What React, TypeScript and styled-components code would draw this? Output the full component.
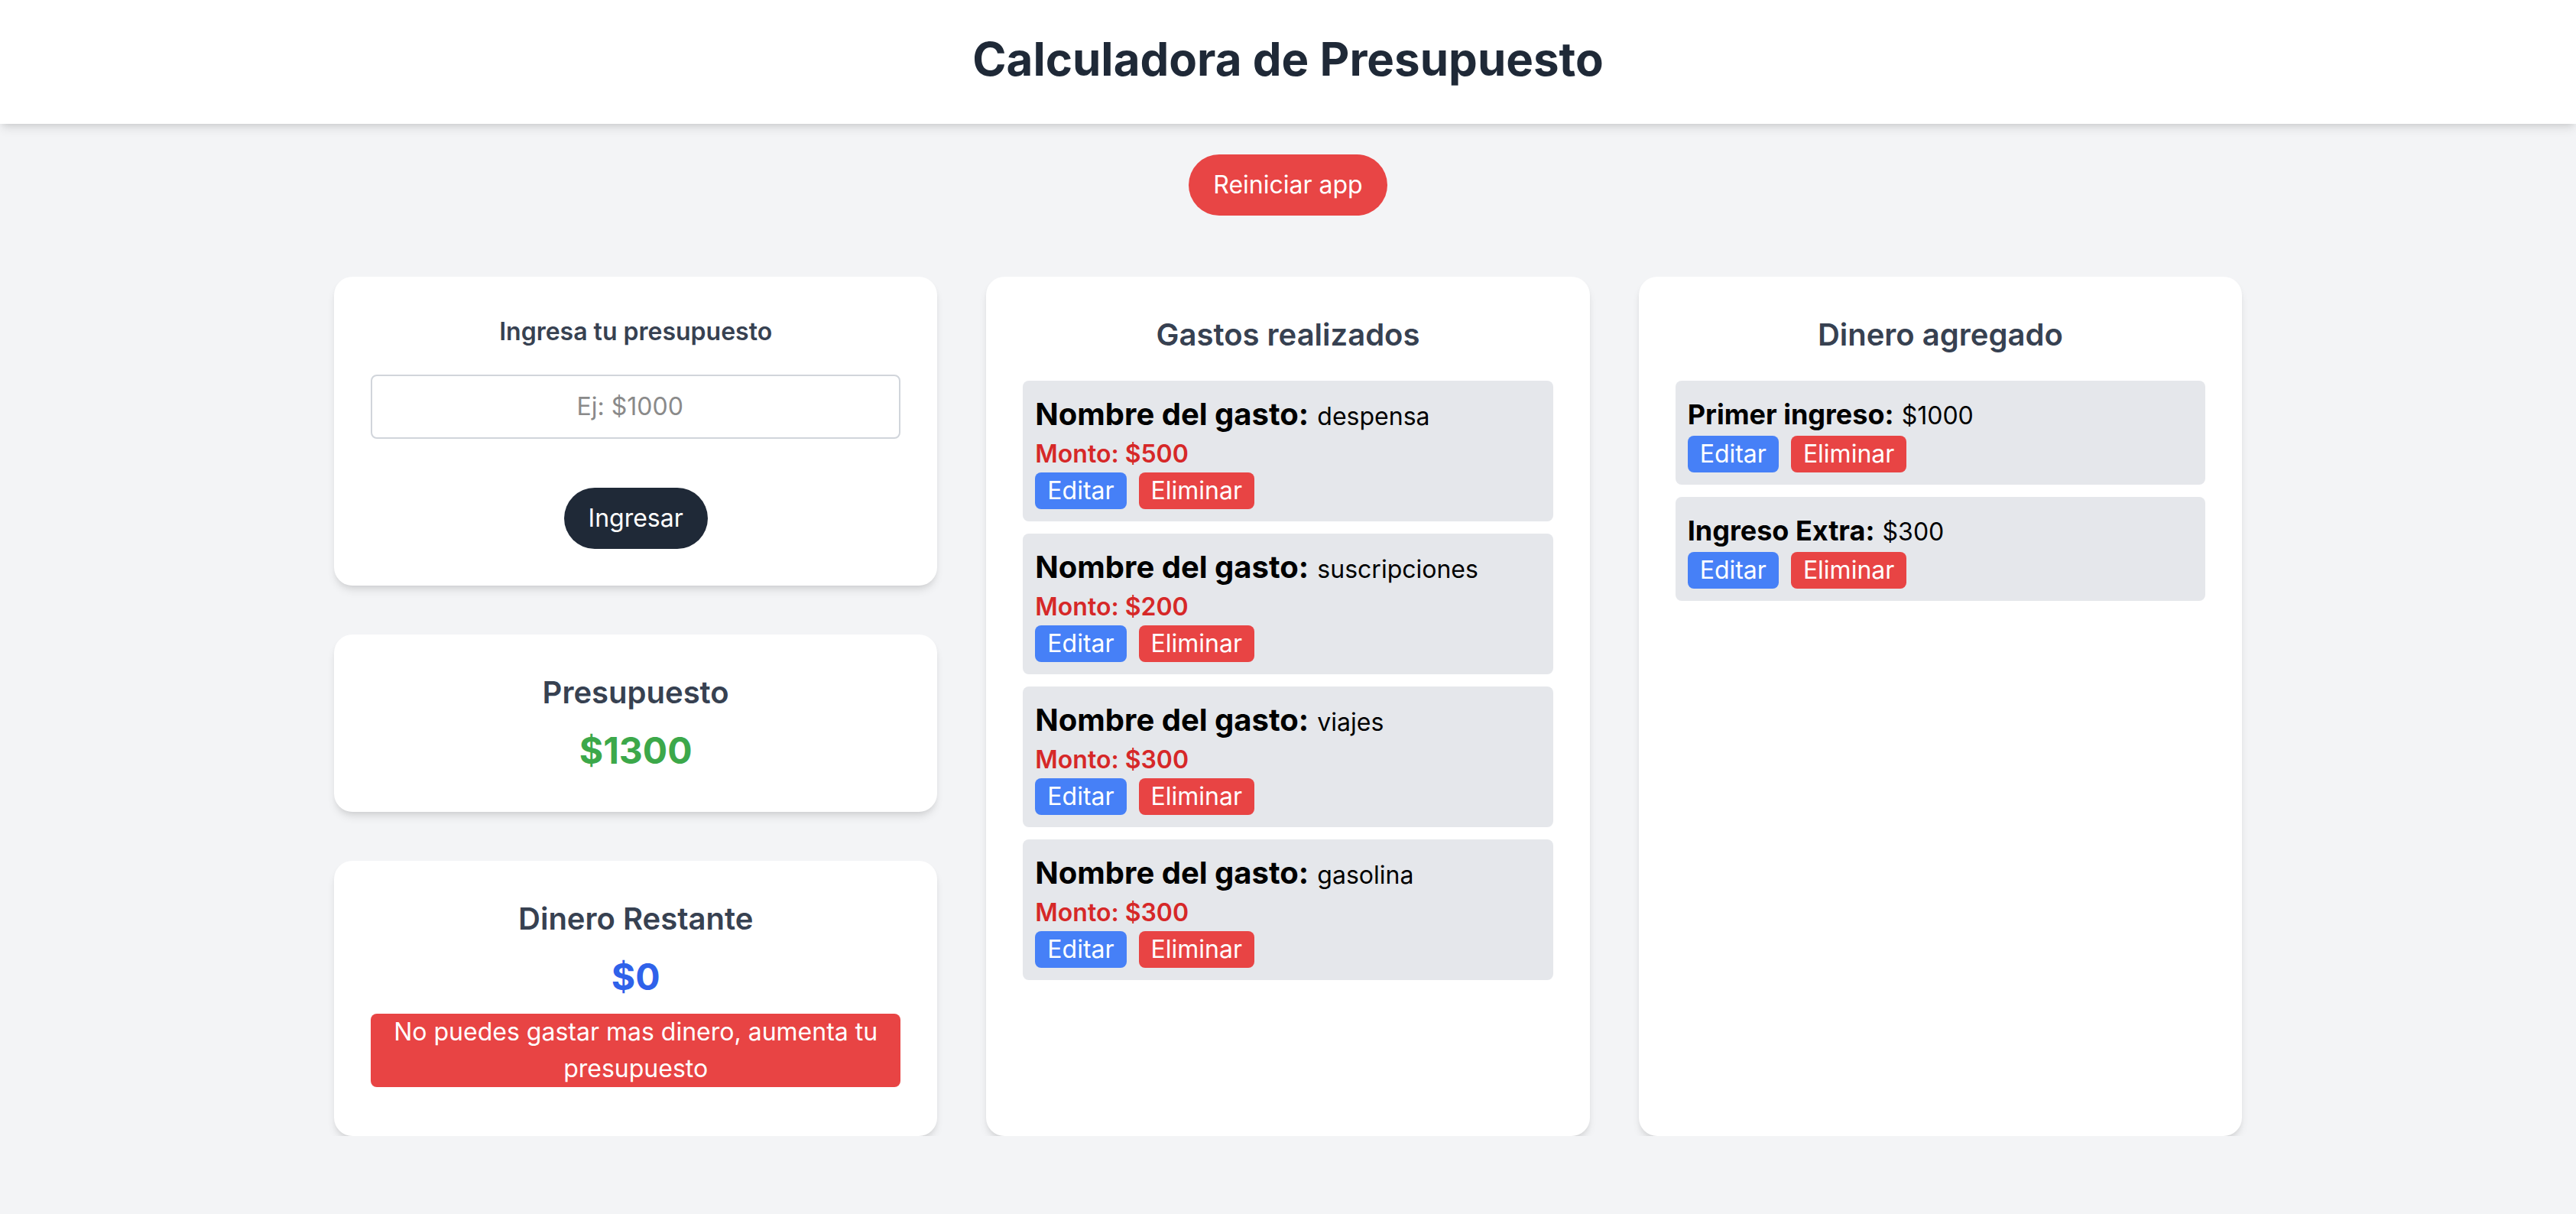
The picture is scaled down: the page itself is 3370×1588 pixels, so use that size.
import styled, { createGlobalStyle } from "styled-components";

interface Gasto {
  id: number;
  nombre: string;
  monto: number;
}

interface Ingreso {
  id: number;
  etiqueta: string;
  monto: number;
}

const gastos: Gasto[] = [
  { id: 1, nombre: "despensa", monto: 500 },
  { id: 2, nombre: "suscripciones", monto: 200 },
  { id: 3, nombre: "viajes", monto: 300 },
  { id: 4, nombre: "gasolina", monto: 300 },
];

const ingresos: Ingreso[] = [
  { id: 1, etiqueta: "Primer ingreso:", monto: 1000 },
  { id: 2, etiqueta: "Ingreso Extra:", monto: 300 },
];

const GlobalStyle = createGlobalStyle`
  * {
    box-sizing: border-box;
  }

  body {
    margin: 0;
    background: #f3f4f6;
    font-family: Inter, "Liberation Sans", sans-serif;
    color: #000;
  }
`;

const shadow = `0 8px 12px -2px rgba(0, 0, 0, 0.1), 0 4px 8px -4px rgba(0, 0, 0, 0.1)`;

const Header = styled.header`
  background: #fff;
  box-shadow: ${shadow};
  padding: 41px 0 49px;
  text-align: center;

  h1 {
    margin: 0;
    font-size: 60px;
    line-height: 72px;
    font-weight: 700;
    color: #1f2937;
  }
`;

const ResetRow = styled.div`
  display: flex;
  justify-content: center;
  margin: 40px 0 80px;
`;

const PillButton = styled.button<{ $tone: "red" | "dark" }>`
  height: 80px;
  padding: 0 32px;
  border: none;
  border-radius: 9999px;
  background: ${({ $tone }) => ($tone === "red" ? "#e84545" : "#1f2937")};
  color: #fff;
  font-family: inherit;
  font-size: 32px;
  line-height: 48px;
  cursor: pointer;
`;

const Container = styled.main`
  max-width: 2560px;
  margin: 0 auto;
  padding: 0 32px;
  display: grid;
  grid-template-columns: repeat(3, minmax(0, 1fr));
  gap: 64px;
  align-items: stretch;
`;

const Column = styled.div`
  display: flex;
  flex-direction: column;
  gap: 64px;
`;

const Card = styled.section`
  background: #fff;
  border-radius: 24px;
  box-shadow: ${shadow};
  padding: 48px;
  text-align: center;
`;

const CardTitle = styled.h2<{ $small?: boolean }>`
  margin: 0;
  font-size: ${({ $small }) => ($small ? "32px" : "40px")};
  line-height: ${({ $small }) => ($small ? "48px" : "56px")};
  font-weight: 600;
  color: #374151;
`;

const BudgetInput = styled.input`
  display: block;
  width: 100%;
  margin-top: 32px;
  padding: 16px;
  border: 2px solid #d1d5db;
  border-radius: 8px;
  font-family: inherit;
  font-size: 32px;
  line-height: 48px;
  text-align: center;
  color: #111827;
  outline: none;

  &::placeholder {
    color: #8a8a8a;
  }
`;

const SubmitRow = styled.div`
  display: flex;
  justify-content: center;
  margin-top: 64px;
`;

const Amount = styled.p<{ $color: string }>`
  margin: 16px 0 0;
  font-size: 48px;
  line-height: 64px;
  font-weight: 700;
  color: ${({ $color }) => $color};
`;

const Alert = styled.div`
  margin: 16px 0 16px;
  padding: 0 16px;
  background: #e84444;
  border-radius: 8px;
  color: #fff;
  font-size: 32px;
  line-height: 48px;
`;

const List = styled.ul`
  list-style: none;
  margin: 32px 0 0;
  padding: 0;
  display: flex;
  flex-direction: column;
  gap: 16px;
  text-align: left;
`;

const Item = styled.li`
  background: #e5e7eb;
  border-radius: 8px;
  padding: 16px;
`;

const ItemLine = styled.p<{ $size: number }>`
  margin: 0;
  font-size: ${({ $size }) => $size}px;
  line-height: 56px;

  strong {
    font-weight: 700;
  }

  span {
    font-size: 32px;
    line-height: 1;
  }
`;

const Monto = styled.p`
  margin: 0;
  font-size: 32px;
  line-height: 48px;
  font-weight: 600;
  color: #d62828;
`;

const Actions = styled.div`
  display: flex;
  gap: 16px;
`;

const SmallButton = styled.button<{ $tone: "blue" | "red" }>`
  border: none;
  border-radius: 8px;
  padding: 0 16px;
  background: ${({ $tone }) => ($tone === "blue" ? "#4680f7" : "#e84444")};
  color: #fff;
  font-family: inherit;
  font-size: 32px;
  line-height: 48px;
  cursor: pointer;
`;

function ItemActions() {
  return (
    <Actions>
      <SmallButton $tone="blue">Editar</SmallButton>
      <SmallButton $tone="red">Eliminar</SmallButton>
    </Actions>
  );
}

export default function App() {
  const presupuesto = ingresos.reduce((acc, i) => acc + i.monto, 0);
  const gastado = gastos.reduce((acc, g) => acc + g.monto, 0);
  const restante = presupuesto - gastado;

  return (
    <>
      <GlobalStyle />
      <Header>
        <h1>Calculadora de Presupuesto</h1>
      </Header>
      <ResetRow>
        <PillButton $tone="red">Reiniciar app</PillButton>
      </ResetRow>
      <Container>
        <Column>
          <Card>
            <CardTitle $small>Ingresa tu presupuesto</CardTitle>
            <BudgetInput type="number" placeholder="Ej: $1000" />
            <SubmitRow>
              <PillButton $tone="dark">Ingresar</PillButton>
            </SubmitRow>
          </Card>
          <Card>
            <CardTitle>Presupuesto</CardTitle>
            <Amount $color="#3ca84a">${presupuesto}</Amount>
          </Card>
          <Card>
            <CardTitle>Dinero Restante</CardTitle>
            <Amount $color="#2f62ea">${restante}</Amount>
            {restante <= 0 && (
              <Alert>No puedes gastar mas dinero, aumenta tu presupuesto</Alert>
            )}
          </Card>
        </Column>

        <Card>
          <CardTitle>Gastos realizados</CardTitle>
          <List>
            {gastos.map((gasto) => (
              <Item key={gasto.id}>
                <ItemLine $size={40}>
                  <strong>Nombre del gasto:</strong> <span>{gasto.nombre}</span>
                </ItemLine>
                <Monto>Monto: ${gasto.monto}</Monto>
                <ItemActions />
              </Item>
            ))}
          </List>
        </Card>

        <Card>
          <CardTitle>Dinero agregado</CardTitle>
          <List>
            {ingresos.map((ingreso) => (
              <Item key={ingreso.id}>
                <ItemLine $size={36}>
                  <strong>{ingreso.etiqueta}</strong> <span>${ingreso.monto}</span>
                </ItemLine>
                <ItemActions />
              </Item>
            ))}
          </List>
        </Card>
      </Container>
    </>
  );
}
